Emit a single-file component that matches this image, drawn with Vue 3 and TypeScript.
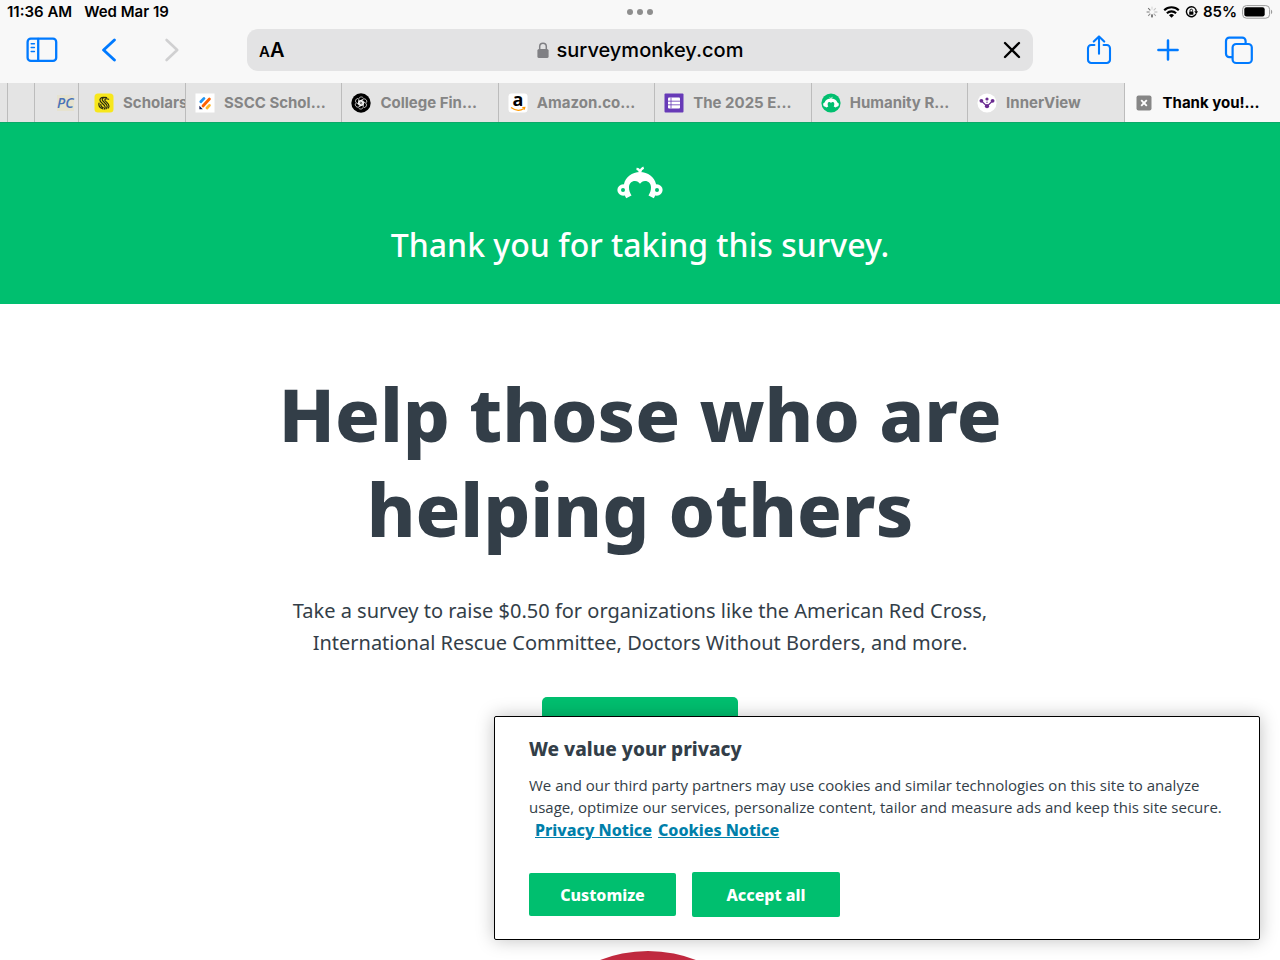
<script setup lang="ts">
interface Tab {
  icon: string
  title: string
  size: string
}

const tabs: Tab[] = [
  { icon: '', title: '', size: 'sliver' },
  { icon: '', title: '', size: 'slim' },
  { icon: 'pc', title: '', size: 'narrow' },
  { icon: 'scholar', title: 'Scholars', size: 'medium' },
  { icon: 'sscc', title: 'SSCC Schol...', size: 'full' },
  { icon: 'knot', title: 'College Fin...', size: 'full' },
  { icon: 'amazon', title: 'Amazon.co...', size: 'full' },
  { icon: 'form', title: 'The 2025 E...', size: 'full' },
  { icon: 'monkey', title: 'Humanity R...', size: 'full' },
  { icon: 'inner', title: 'InnerView', size: 'full' },
  { icon: 'close', title: 'Thank you!...', size: 'full active' },
]

const petals = [0, 60, 120, 180, 240, 300]
const rays = [0, 45, 90, 135, 180, 225, 270, 315]
</script>

<template>
  <div class="screen">
    <header class="chrome">
      <div class="status">
        <div class="clock"><span>11:36 AM</span><span>Wed Mar 19</span></div>
        <div class="dots"><i></i><i></i><i></i></div>
        <div class="indicators">
          <svg class="spinner" width="12" height="12" viewBox="0 0 12 12">
            <line v-for="(r, i) in rays" :key="r" x1="6" y1="3.6" x2="6" y2=".6" stroke="#000" stroke-width="1"
              :stroke-opacity="r === 180 ? 1 : 0.15 + i * 0.06" :transform="`rotate(${r} 6 6)`" />
          </svg>
          <svg class="wifi" width="17" height="12" viewBox="0 0 17 12" fill="none" stroke="#000" stroke-width="2.1">
            <path d="M1.2 4.3a10.4 10.4 0 0 1 14.6 0M3.9 7.2a6.6 6.6 0 0 1 9.2 0" />
            <path d="M8.5 11.7 6 9.2a3.6 3.6 0 0 1 5 0z" fill="#000" stroke="none" />
          </svg>
          <svg class="rotation" width="13" height="12" viewBox="0 0 13 12" fill="none" stroke="#000" stroke-width="1.4">
            <path d="M10.2 2.4A5 5 0 1 0 11 7.8" />
            <path d="M9.2 5.2h3.8L11.4 8z" fill="#000" stroke="none" />
            <path d="M10.2 2.4a5 5 0 0 1 1 3.2" />
            <rect x="4.2" y="5.4" width="4.2" height="3.4" rx=".5" fill="#000" stroke="none" />
            <path d="M5 5.6V4.5a1.3 1.3 0 0 1 2.6 0v1.1" stroke-width=".9" />
          </svg>
          <span class="percent">85%</span>
          <svg class="battery" width="31" height="14" viewBox="0 0 31 14">
            <rect x=".6" y=".6" width="27" height="12.6" rx="3.8" fill="none" stroke="#9a9a9a" />
            <rect x="2.3" y="2.3" width="20.4" height="9.2" rx="2.2" />
            <path d="M29 4.8c1.6.6 1.6 3.8 0 4.4z" fill="#9a9a9a" />
          </svg>
        </div>
      </div>

      <div class="toolbar">
        <div class="group left">
          <button aria-label="Show sidebar">
            <svg width="32" height="26" viewBox="0 0 32 26" fill="none" stroke="#007aff" stroke-width="2.3" stroke-linecap="round">
              <rect x="1.6" y="1.7" width="28.6" height="22.2" rx="3.2" />
              <path d="M12.2 2v21.6" />
              <path d="M5.2 6.8h3.2M5.2 10.6h3.2M5.2 14.4h3.2" stroke-width="1.5" />
            </svg>
          </button>
          <button aria-label="Back">
            <svg width="16" height="24" viewBox="0 0 16 24" fill="none" stroke="#007aff" stroke-width="2.9" stroke-linecap="round" stroke-linejoin="round"><path d="M13.4 2 2.6 12l10.8 10" /></svg>
          </button>
          <button aria-label="Forward" disabled>
            <svg width="16" height="24" viewBox="0 0 16 24" fill="none" stroke="#d0d0d1" stroke-width="2.6" stroke-linecap="round" stroke-linejoin="round"><path d="M2.6 2 13.2 12 2.6 22" /></svg>
          </button>
        </div>
        <div class="address">
          <button class="reader" aria-label="Page settings"><small>A</small><span>A</span></button>
          <div class="host">
            <svg width="12" height="17" viewBox="0 0 12 17"><rect x=".4" y="7" width="11.2" height="9" rx="1.6" fill="#808084" /><path d="M2.7 7.4V4.6a3.3 3.3 0 0 1 6.6 0v2.8" fill="none" stroke="#808084" stroke-width="1.5" /></svg>
            <span>surveymonkey.com</span>
          </div>
          <button class="stop" aria-label="Stop loading">
            <svg width="18" height="18" viewBox="0 0 18 18" stroke="#000" stroke-width="2.3" stroke-linecap="round"><path d="m2 2 14 14M16 2 2 16" /></svg>
          </button>
        </div>
        <div class="group right">
          <button aria-label="Share">
            <svg width="26" height="30" viewBox="0 0 26 30" fill="none" stroke="#007aff" stroke-width="2.1" stroke-linecap="round" stroke-linejoin="round"><path d="M8.4 10H5.2a3.2 3.2 0 0 0-3.2 3.2v11.6A3.2 3.2 0 0 0 5.2 28h15.6a3.2 3.2 0 0 0 3.2-3.2V13.2a3.2 3.2 0 0 0-3.2-3.2h-3.2M13 18.8V1.6M7.8 6.6 13 1.4l5.2 5.2" /></svg>
          </button>
          <button aria-label="New tab">
            <svg width="22" height="22" viewBox="0 0 22 22" stroke="#007aff" stroke-width="2.5" stroke-linecap="round"><path d="M11 1.4v19.2M1.4 11h19.2" /></svg>
          </button>
          <button aria-label="Show tabs">
            <svg width="30" height="30" viewBox="0 0 30 30" fill="none" stroke="#007aff" stroke-width="2.2"><rect x="8.6" y="9" width="19.2" height="19" rx="3.6" /><path d="M8.8 22.2H5.4a3.4 3.4 0 0 1-3.4-3.4V6a3.4 3.4 0 0 1 3.4-3.4h12.8A3.4 3.4 0 0 1 21.6 6v3" /></svg>
          </button>
        </div>
      </div>

      <nav class="tabs" aria-label="Open tabs">
        <button v-for="(tab, n) in tabs" :key="n" class="tab" :class="tab.size" :aria-label="tab.title || 'Tab'">
          <span v-if="tab.icon === 'pc'" class="pc">PC</span>
          <svg v-else-if="tab.icon" class="favicon" width="20" height="20" viewBox="0 0 20 20">
            <template v-if="tab.icon === 'scholar'">
              <rect x=".5" y=".5" width="19" height="19" rx="3.5" fill="#f7e71c" />
              <g fill="none" stroke="#2b2a10" stroke-width="1.2" stroke-linecap="round">
                <path d="M12.6 4.6C9.400 4 7.600 5.400 8.400 7.200c.8 1.800 4.800 3.600 4.800 6 0 1-.4 1.800-1.200 2.600" />
                <path d="M10 4.400C6.600 4.200 5.400 6 6.200 8c.9 2.200 5 3.800 5 6 0 .8-.4 1.500-1 2" />
                <path d="M14.600 6.200c-2.200-1-4.200-.2-3.600 1.200.8 1.600 4.200 3.200 4 5.800-.1.900-.4 1.500-.9 2" />
                <path d="M5 10.200c-.5 2.400 1 4.800 3.600 5.600M6.800 11.400c0 1.600.9 2.700 2.400 3.200" />
              </g>
            </template>
            <template v-else-if="tab.icon === 'sscc'">
              <rect x=".5" y=".5" width="19" height="19" fill="#fff" />
              <g stroke-width="2.800" stroke-linecap="round">
                <path d="m5.800 8.800 3.200-3.400" stroke="#2196f3" />
                <path d="m8 13 6.400-7" stroke="#ff6100" />
                <path d="m12 15 2.400-2.600" stroke="#ffb629" />
              </g>
              <path d="M4.400 12.800v3.400h3.400z" fill="#0a1551" />
            </template>
            <template v-else-if="tab.icon === 'knot'">
              <circle cx="10" cy="10" r="9.700" />
              <g fill="none" stroke="#fff" stroke-width=".7">
                <path v-for="a in petals" :key="a" d="M7.700 11.300V6.400c0-2.500 3.300-3.300 4.700-1.400M8.900 10.500V7.200l4.300 2.500" :transform="`rotate(${a} 10 10)`" />
              </g>
            </template>
            <template v-else-if="tab.icon === 'amazon'">
              <rect x=".5" y=".5" width="19" height="19" rx="3" fill="#fff" />
              <text x="10" y="13" text-anchor="middle" class="amazon-letter">a</text>
              <path d="M3 14.600c4.200 3 9.400 3.200 13 .9M14.300 14.500l2.500-.1-.6 2.200" fill="none" stroke="#f90" stroke-width="1.200" />
            </template>
            <template v-else-if="tab.icon === 'form'">
              <rect x=".5" y=".5" width="19" height="19" rx="1" fill="#673ab7" />
              <rect x="4" y="4.600" width="12" height="10.800" rx="1" fill="#fff" />
              <path d="M4 8.200h12M4 11.800h12M7 4.600v10.800" stroke="#673ab7" stroke-width=".8" />
            </template>
            <template v-else-if="tab.icon === 'monkey'">
              <circle cx="10" cy="10" r="9.600" fill="#00bf6f" />
              <path d="M3.600 9.600C4.400 7.200 7 5.600 10 5.600s5.600 1.600 6.400 4a2.100 2.100 0 0 1-.7 4.100l-1 .9-2-1c1.200-2.400.6-4.600-1-4.600-.7 0-1.300.4-1.700 1-.4-.6-1-1-1.700-1-1.600 0-2.200 2.200-1 4.600l-2 1-1-.9a2.100 2.100 0 0 1-.7-4.100z" fill="#fff" />
              <path d="M8.800 4.400 10 5.800l1.400-1.900" fill="none" stroke="#fff" stroke-width=".8" />
            </template>
            <template v-else-if="tab.icon === 'inner'">
              <circle cx="10" cy="10" r="9.600" fill="#fff" />
              <g fill="#6a2c91"><circle cx="4.400" cy="7.800" r="1.900" /><circle cx="15.600" cy="7.800" r="1.900" /><circle cx="10" cy="6" r="1.600" /><circle cx="10" cy="13.200" r="2.100" /><circle cx="10" cy="9.200" r=".7" /></g>
              <path d="m4.600 8 5.400 5.400L15.400 8" fill="none" stroke="#6a2c91" stroke-width="1.200" />
            </template>
            <template v-else>
              <rect x="2.500" y="2.500" width="15" height="15" rx="2" fill="#868686" />
              <path d="m7.200 7.200 5.600 5.600m0-5.600-5.600 5.600" stroke="#fff" stroke-width="1.900" />
            </template>
          </svg>
          <span v-if="tab.title" class="title">{{ tab.title }}</span>
        </button>
      </nav>
    </header>

    <main class="page">
      <section class="banner">
        <svg width="46" height="34" viewBox="0 0 46 34">
          <path d="M7 18C8.500 11 15 6 23 6s14.500 5 16 12l-.5 11-1.700 3.300-5.300-2.800c1.500-2.500 2.500-5 2.500-8 0-4-2.500-6.500-6-6.500-2.200 0-3.800 1.200-5 2.800-1.200-1.600-2.800-2.800-5-2.800-3.500 0-6 2.500-6 6.500 0 3 1 5.500 2.500 8l-5.300 2.800L7.500 29z" fill="#fff" />
          <circle cx="6.200" cy="24" r="5.800" fill="#fff" /><circle cx="39.800" cy="24" r="5.800" fill="#fff" />
          <circle cx="6" cy="24" r="2" fill="#00bf6f" /><circle cx="40" cy="24" r="2" fill="#00bf6f" />
          <path d="M19.500 2.800c2 .1 3.200 1.200 3.500 3.800.4-2.400 1.600-4.200 3.700-5" fill="none" stroke="#fff" stroke-width="2.200" />
        </svg>
        <p>Thank you for taking this survey.</p>
      </section>
      <section class="appeal">
        <h1>Help those who are<br />helping others</h1>
        <p>Take a survey to raise $0.50 for organizations like the American Red Cross,<br />International Rescue Committee, Doctors Without Borders, and more.</p>
        <button class="cta" aria-label="Take a survey"></button>
        <div class="seal"></div>
      </section>
    </main>

    <aside class="consent" role="dialog" aria-labelledby="consent-title">
      <h2 id="consent-title">We value your privacy</h2>
      <p>We and our third party partners may use cookies and similar technologies on this site to analyze<br />usage, optimize our services, personalize content, tailor and measure ads and keep this site secure.</p>
      <div class="links"><a href="#privacy">Privacy Notice</a><a href="#cookies">Cookies Notice</a></div>
      <div class="actions">
        <button class="customize">Customize</button>
        <button class="accept">Accept all</button>
      </div>
    </aside>
  </div>
</template>

<style>
body { margin: 0; }
</style>

<style scoped>
* { box-sizing: border-box; }
.screen { position: relative; display: flex; flex-direction: column; height: 100vh; overflow: hidden; background: #fff; font-family: "Noto Sans", sans-serif; color: #333e48; }
button { border: 0; padding: 0; background: none; font: inherit; color: inherit; }
svg { display: block; flex: none; }
h1, h2, p { margin: 0; }

.chrome { flex: none; background: #f8f8f8; font-family: Inter, "Liberation Sans", sans-serif; color: #000; }
.status { display: grid; grid-template-columns: 1fr auto 1fr; align-items: center; height: 24px; padding: 0 7px; font-size: 15px; font-weight: 600; line-height: 20px; }
.clock { display: flex; gap: 12px; }
.dots { display: flex; gap: 4px; }
.dots i { width: 6px; height: 6px; border-radius: 50%; background: #8e8e8e; }
.indicators { display: flex; justify-content: flex-end; align-items: center; gap: 5px; }

.toolbar { display: grid; grid-template-columns: 247px 1fr 247px; align-items: center; height: 59px; padding-bottom: 7px; }
.group { display: flex; align-items: center; }
.left { padding-left: 26px; gap: 43px; }
.left button:last-child { margin-left: 4px; }
.right { justify-content: flex-end; padding-right: 26px; gap: 45px; }
.address { display: grid; grid-template-columns: 60px 1fr 60px; align-items: center; height: 42px; padding: 0 12px; border-radius: 11px; background: #e3e3e4; }
.reader { display: flex; align-items: baseline; font-size: 20px; font-weight: 600; }
.reader small { font-size: 15px; }
.host { display: flex; align-items: center; justify-content: center; gap: 8px; font-size: 20px; font-weight: 500; }
.stop { justify-self: end; }

.tabs { display: flex; height: 39px; }
.tab { display: flex; align-items: center; gap: 9px; overflow: hidden; min-width: 0; padding-left: 9px; border-right: 1px solid #bcbcbc; background: #e4e4e4; color: #858585; font-size: 15px; font-weight: 700; white-space: nowrap; }
.sliver { flex: 0 0 8px; padding-left: 0; }
.slim { flex: 0 0 27px; }
.narrow { flex: 0 0 44px; padding-left: 22px; }
.medium { flex: 0 0 107px; padding-left: 15px; }
.full { flex: 1 1 0; }
.active { border-right: 0; background: #f8f8f8; color: #000; }
.pc { background: #e6e2cf; color: #4a72b8; font-family: "Open Sans", sans-serif; font-size: 14px; font-weight: 600; font-style: italic; line-height: 16px; }
.amazon-letter { font-family: "Open Sans", sans-serif; font-size: 18px; font-weight: 700; }

.page { flex: 1; min-height: 0; overflow: hidden; }
.banner { display: flex; flex-direction: column; align-items: center; gap: 22px; height: 182px; padding-top: 43px; border-top: 1px solid #0ba968; background: #00bf6f; color: #fff; font-size: 32px; font-weight: 500; line-height: 46px; }
.appeal { display: flex; flex-direction: column; align-items: center; padding-top: 62px; text-align: center; }
h1 { font-size: 74px; font-weight: 800; line-height: 95px; }
.appeal p { margin-top: 39px; font-size: 20px; line-height: 32px; }
.cta { flex: none; width: 196px; height: 54px; margin-top: 38px; border-radius: 5px; background: #00bf6f; }
.seal { flex: none; width: 264px; height: 264px; margin: 200px 0 0 16px; border-radius: 50%; background: #c22a40; }

.consent { position: absolute; right: 20px; bottom: 20px; width: 766px; padding: 19px 34px 22px; border: 1px solid #000; border-radius: 2px; background: #fff; box-shadow: 0 0 18px rgba(0, 0, 0, .25); }
h2 { font-size: 19px; font-weight: 800; line-height: 26px; }
.consent p { margin-top: 12px; font-family: "Open Sans", sans-serif; font-size: 15px; line-height: 22px; white-space: nowrap; }
.links { display: flex; gap: 6px; padding-left: 6px; font-size: 16px; font-weight: 800; line-height: 24px; }
.links a { color: #007faa; }
.actions { display: flex; align-items: center; gap: 16px; margin-top: 30px; }
.actions button { border-radius: 2px; background: #00bf6f; color: #fff; font-size: 16px; font-weight: 800; }
.actions .customize { width: 147px; height: 43px; }
.actions .accept { width: 148px; height: 45px; }
</style>
